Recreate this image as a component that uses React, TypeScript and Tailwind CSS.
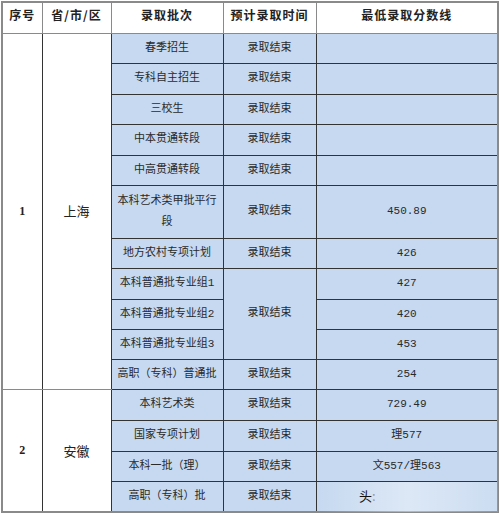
import React from "react";

interface Row {
  batch: string;
  time?: string;
  timeSpan?: number;
  score: string;
  h: number;
}

const shanghai: Row[] = [
  { batch: "春季招生", time: "录取结束", score: "", h: 30 },
  { batch: "专科自主招生", time: "录取结束", score: "", h: 31 },
  { batch: "三校生", time: "录取结束", score: "", h: 30 },
  { batch: "中本贯通转段", time: "录取结束", score: "", h: 31 },
  { batch: "中高贯通转段", time: "录取结束", score: "", h: 30 },
  { batch: "本科艺术类甲批平行段", time: "录取结束", score: "450.89", h: 53 },
  { batch: "地方农村专项计划", time: "录取结束", score: "426", h: 30 },
  { batch: "本科普通批专业组1", time: "录取结束", timeSpan: 3, score: "427", h: 31 },
  { batch: "本科普通批专业组2", score: "420", h: 30 },
  { batch: "本科普通批专业组3", score: "453", h: 30 },
  { batch: "高职（专科）普通批", time: "录取结束", score: "254", h: 30 },
];

const anhui: Row[] = [
  { batch: "本科艺术类", time: "录取结束", score: "729.49", h: 31 },
  { batch: "国家专项计划", time: "录取结束", score: "理577", h: 31 },
  { batch: "本科一批（理）", time: "录取结束", score: "文557/理563", h: 30 },
  { batch: "高职（专科）批", time: "录取结束", score: "", h: 31 },
];

const groups = [
  { no: "1", region: "上海", rows: shanghai },
  { no: "2", region: "安徽", rows: anhui },
];

const head = "border border-[#8a8a8a] font-bold text-[12px] text-[#222] align-top pt-[3px] tracking-[1px]";
const side = "border border-[#8a8a8a] border-r-[#333] bg-white text-center text-[12px] text-[#222]";
const blue = "border border-[#333] bg-[#c6d9f0] text-center text-[11px] text-[#2a2a2a] px-[4px] leading-[21px]";

export default function App() {
  return (
    <div className="relative w-[500px] h-[513px] overflow-hidden bg-white pt-[1px] pl-[1px]">
      <table
        className="w-[498px] border-collapse border-2 border-[#8a8a8a] table-fixed"
        style={{ fontFamily: '"Liberation Mono", "Noto Sans CJK SC", monospace' }}
      >
        <colgroup>
          <col className="w-[40px]" />
          <col className="w-[69px]" />
          <col className="w-[112px]" />
          <col className="w-[93px]" />
          <col />
        </colgroup>
        <thead>
          <tr className="h-[31px]" style={{ fontFamily: '"Noto Sans CJK SC", sans-serif' }}>
            <th className={head}>序号</th>
            <th className={head}>省/市/区</th>
            <th className={head}>录取批次</th>
            <th className={head}>预计录取时间</th>
            <th className={head}>最低录取分数线</th>
          </tr>
        </thead>
        <tbody>
          {groups.map((g) =>
            g.rows.map((r, i) => (
              <tr key={g.no + i} style={{ height: r.h }}>
                {i === 0 && (
                  <>
                    <td
                      rowSpan={g.rows.length}
                      className={side + " border-r-[#8a8a8a] font-bold"}
                      style={{ fontFamily: '"Liberation Serif", serif' }}
                    >
                      {g.no}
                    </td>
                    <td
                      rowSpan={g.rows.length}
                      className={side + " text-[13px]"}
                      style={{ fontFamily: '"Noto Sans CJK SC", sans-serif' }}
                    >
                      {g.region}
                    </td>
                  </>
                )}
                <td className={blue}>{r.batch}</td>
                {r.time && (
                  <td rowSpan={r.timeSpan ?? 1} className={blue}>
                    {r.time}
                  </td>
                )}
                <td className={blue}>{r.score}</td>
              </tr>
            ))
          )}
        </tbody>
      </table>
      {/* watermark */}
      <div className="absolute left-[318px] top-[482px] w-[180px] h-[30px] bg-gradient-to-r from-transparent via-white/40 to-white/10" />
      <div
        className="absolute left-[359px] top-[486px] text-[13px] text-[#111]"
        style={{ fontFamily: '"Noto Sans CJK SC", sans-serif' }}
      >
        头<span className="text-[#999]">:</span>
      </div>
    </div>
  );
}
